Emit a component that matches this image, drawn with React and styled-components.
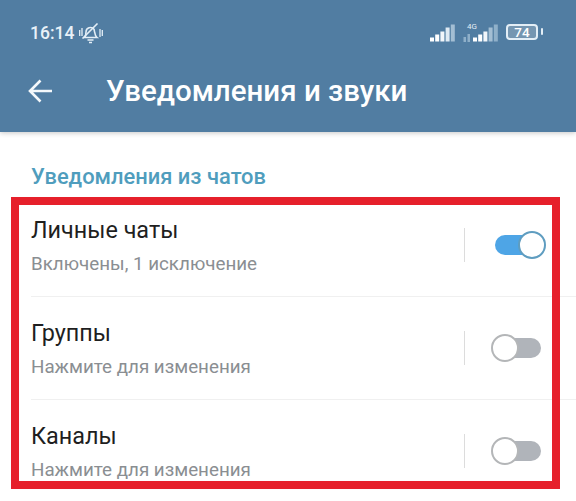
import React from 'react';
import styled, { createGlobalStyle } from 'styled-components';

const Global = createGlobalStyle`
  html, body { margin: 0; padding: 0; background: #fff; }
  body { font-family: Roboto, "Noto Sans", sans-serif; }
`;

const Screen = styled.div`
  position: relative;
  width: 576px;
  height: 501px;
  overflow: hidden;
  background: #fff;
`;

const Header = styled.header`
  height: 132px;
  background: #517da2;
  box-shadow: 0 1px 5px rgba(0, 0, 0, 0.22);
  color: #fff;
  display: flex;
  flex-direction: column;
`;

const StatusBar = styled.div`
  height: 50px;
  padding: 16px 38px 0 30px;
  box-sizing: border-box;
  display: flex;
  align-items: center;
  justify-content: space-between;
`;

const StatusGroup = styled.div`
  display: flex;
  align-items: center;
  gap: ${p => p.$gap || 4}px;
`;

const Clock = styled.span`
  font-size: 17.5px;
  font-weight: 500;
  color: #e8f1f8;
`;

const Battery = styled.div`
  width: 32px;
  height: 16px;
  margin-bottom: 3px;
  box-sizing: border-box;
  border: 2px solid #e3eef6;
  border-radius: 4px;
  background: #7596b1;
  color: #fff;
  font-size: 13.5px;
  font-weight: 500;
  line-height: 12px;
  text-align: center;
  position: relative;

  &::after {
    content: '';
    position: absolute;
    right: -7px;
    top: 2px;
    width: 2px;
    height: 7px;
    background: #e3eef6;
    border-radius: 1px;
  }
`;

const ActionBar = styled.div`
  flex: 1;
  display: flex;
  align-items: center;
  padding: 0 0 1px 28px;
`;

const Title = styled.h1`
  margin: 0 0 0 53px;
  font-size: 29.5px;
  font-weight: 500;
`;

const SectionTitle = styled.h2`
  margin: 0;
  padding: 33px 31px 0;
  height: 62px;
  box-sizing: border-box;
  font-size: 21.9px;
  font-weight: 500;
  line-height: 24px;
  color: #4f9dbd;
`;

const Row = styled.div`
  height: 103px;
  box-sizing: border-box;
  margin-left: 31px;
  display: flex;
  align-items: center;
  border-bottom: 1px solid #f0f0f0;
  &:last-of-type { border-bottom: 0; }
`;

const RowText = styled.div`
  flex: 1;
  padding-top: 2px;
`;

const RowTitle = styled.div`
  font-size: 23.4px;
  line-height: 26px;
  color: #1f1f1f;
`;

const RowSub = styled.div`
  margin-top: 10px;
  font-size: 18.8px;
  line-height: 22px;
  color: #8a8e92;
`;

const Separator = styled.div`
  width: 1px;
  height: 34px;
  background: #dcdcdc;
`;

const ToggleSlot = styled.div`
  width: 111px;
  padding-left: 30px;
  box-sizing: border-box;
  display: flex;
`;

const Track = styled.div`
  position: relative;
  width: 46px;
  height: 20px;
  border-radius: 10px;
  background: ${p => (p.$on ? '#4ea5e6' : '#b0b4ba')};
`;

const Knob = styled.div`
  position: absolute;
  top: -4px;
  left: ${p => (p.$on ? '23px' : '-4px')};
  width: 28px;
  height: 28px;
  box-sizing: border-box;
  border-radius: 50%;
  background: #fff;
  border: 2.5px solid ${p => (p.$on ? '#5f9dc0' : '#b4b6b8')};
`;

const Frame = styled.div`
  position: absolute;
  left: 11px;
  top: 197px;
  width: 549px;
  height: 292px;
  box-sizing: border-box;
  border: 8px solid #e6202b;
  pointer-events: none;
`;

const BackIcon = () => (
  <svg width="25" height="24" viewBox="0 0 25 24" fill="none" stroke="#f4f8fb" strokeWidth="2.6">
    <path d="M24 12H2.500M12.500 1.500 2 12l10.500 10.500" />
  </svg>
);

const MutedBell = () => (
  <svg width="24" height="21" viewBox="0 0 24 21" fill="none" stroke="#e3eef6" strokeWidth="1.6">
    <path d="M5.500 14.500c1.500-1.500 1.500-3.500 1.500-5.500a4.500 4.500 0 0 1 8-2.800c.8 3 .5 6.300 3 8.300H5.500Z" />
    <path d="M8.500 17h6M10 19.500h3" />
    <path d="M3.500 15.500 18.500 0.500" />
    <path d="M0.700 7v6M3 5v8M21 6v8M23.300 7v6" strokeWidth="1.300" />
  </svg>
);

// bar colours run left to right, the network that is not in use is paler
const barHeights = [4, 7, 10, 14, 17];

const Signal = ({ colors, width = 25 }) => (
  <svg width={width} height="18" viewBox={`0 0 ${width} 18`}>
    {barHeights.map((h, i) => (
      <rect key={i} x={i * 5.200} y={17.500 - h} width="4" height={h} fill={colors[i]} />
    ))}
  </svg>
);

const SimGroup = styled.div`
  position: relative;
  display: flex;
  align-items: flex-end;
  gap: 2px;
`;

const NetworkLabel = styled.span`
  position: absolute;
  left: 4px;
  top: -1px;
  font-size: 8px;
  line-height: 8px;
  color: #e3eef6;
`;

const DataArrows = () => (
  <svg width="8" height="8" viewBox="0 0 8 8">
    <rect x="0.500" y="3" width="2.500" height="5" fill="#8fb0c9" />
    <rect x="4.500" y="0" width="2.500" height="8" fill="#8fb0c9" />
  </svg>
);

const rows = [
  { title: 'Личные чаты', sub: 'Включены, 1 исключение', on: true },
  { title: 'Группы', sub: 'Нажмите для изменения', on: false },
  { title: 'Каналы', sub: 'Нажмите для изменения', on: false },
];

const simOne = ['#fff', '#fff', '#f2f6fa', '#dfeaf3', '#a3bed3'];
const simTwo = ['#fff', '#fff', '#f2f6fa', '#a3bed3', '#8fb0c9'];

export default function App() {
  return (
    <Screen>
      <Global />
      <Header>
        <StatusBar>
          <StatusGroup $gap={5}>
            <Clock>16:14</Clock>
            <MutedBell />
          </StatusGroup>
          <StatusGroup $gap={8}>
            <Signal colors={simOne} />
            <SimGroup>
              <NetworkLabel>4G</NetworkLabel>
              <DataArrows />
              <Signal colors={simTwo} />
            </SimGroup>
            <Battery>74</Battery>
          </StatusGroup>
        </StatusBar>
        <ActionBar>
          <BackIcon />
          <Title>Уведомления и звуки</Title>
        </ActionBar>
      </Header>
      <SectionTitle>Уведомления из чатов</SectionTitle>
      {rows.map(r => (
        <Row key={r.title}>
          <RowText>
            <RowTitle>{r.title}</RowTitle>
            <RowSub>{r.sub}</RowSub>
          </RowText>
          <Separator />
          <ToggleSlot>
            <Track $on={r.on}>
              <Knob $on={r.on} />
            </Track>
          </ToggleSlot>
        </Row>
      ))}
      <Frame />
    </Screen>
  );
}
